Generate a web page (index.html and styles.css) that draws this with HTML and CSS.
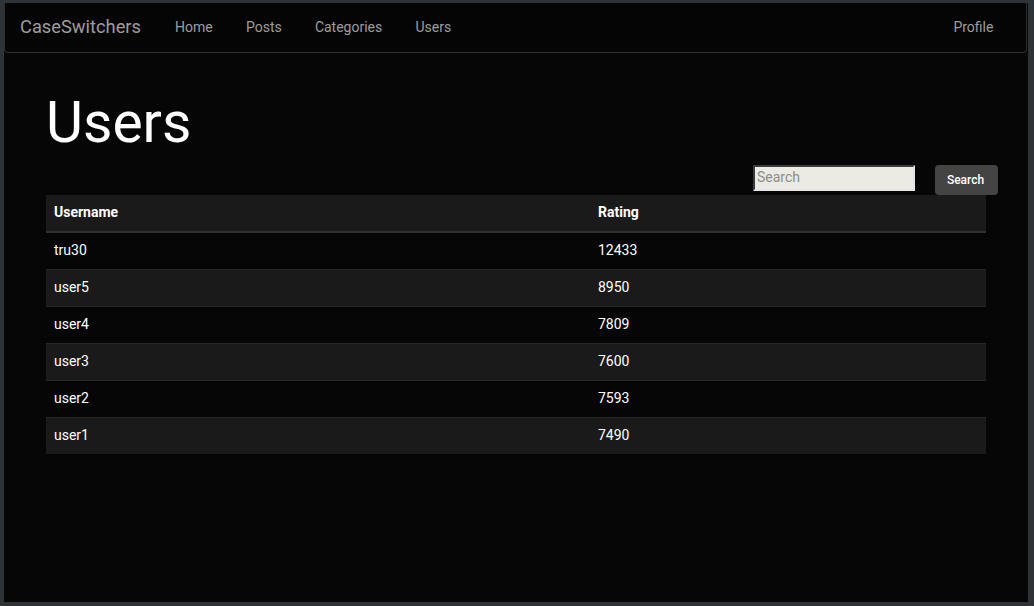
FILE: index.html
```html
<!DOCTYPE html>
<html lang="en">
<head>
<meta charset="utf-8">
<title>Users - CaseSwitchers</title>
<link rel="stylesheet" href="styles.css">
</head>
<body>
<nav class="navbar">
  <a class="brand" href="#">CaseSwitchers</a>
  <ul class="nav">
    <li><a href="#">Home</a></li>
    <li><a href="#">Posts</a></li>
    <li><a href="#">Categories</a></li>
    <li><a href="#">Users</a></li>
  </ul>
  <ul class="nav nav-right">
    <li><a href="#">Profile</a></li>
  </ul>
</nav>
<main class="container">
  <h1 class="title">Users</h1>
  <form class="search">
    <input class="search-input" type="text" placeholder="Search">
    <button class="search-btn" type="button">Search</button>
  </form>
  <table class="table">
    <thead>
      <tr><th class="col-name">Username</th><th>Rating</th></tr>
    </thead>
    <tbody>
      <tr><td>tru30</td><td>12433</td></tr>
      <tr><td>user5</td><td>8950</td></tr>
      <tr><td>user4</td><td>7809</td></tr>
      <tr><td>user3</td><td>7600</td></tr>
      <tr><td>user2</td><td>7593</td></tr>
      <tr><td>user1</td><td>7490</td></tr>
    </tbody>
  </table>
</main>
</body>
</html>
```
FILE: styles.css
```css
html {
  background: #2e3338;
  height: 100%;
}
body {
  margin: 3px 6px 4px 4px;
  height: 599px;
  background: #060606;
  font-family: Roboto, "Liberation Sans", Arial, sans-serif;
  color: #fff;
  font-size: 14px;
  line-height: 20px;
  overflow: hidden;
}
.navbar {
  display: flex;
  align-items: center;
  box-sizing: border-box;
  height: 50px;
  margin-right: 1px;
  border: 1px solid #2f2f2f;
  border-top: none;
  border-radius: 0 0 4px 4px;
  background: #050505;
  padding: 0 15px 2px;
}
.brand {
  color: #9d9d9d;
  text-decoration: none;
  font-size: 18.3px;
  line-height: 20px;
  margin-right: 17.5px;
}
.nav {
  list-style: none;
  margin: 0;
  padding: 0;
  display: flex;
}
.nav a {
  display: block;
  color: #9d9d9d;
  text-decoration: none;
  font-size: 14px;
  padding: 0 16.6px;
}
.nav-right {
  margin-left: auto;
  margin-right: 1px;
}
.container {
  width: 940px;
  margin: 0 auto;
}
.title {
  margin: 37px 0 0;
  font-size: 57px;
  line-height: 66px;
  font-weight: 400;
}
.search {
  display: flex;
  justify-content: flex-end;
  align-items: flex-start;
  margin: 9px -12px 0 0;
  height: 30px;
}
.search-input {
  box-sizing: border-box;
  width: 162px;
  height: 26px;
  margin: 0 20px 0 0;
  padding: 0 2px 2px;
  background: #ebebe4;
  border: 2px inset #8f8f8f;
  border-color: #8f8f8f #e6e6e6 #e6e6e6 #8f8f8f;
  font-family: Roboto, "Liberation Sans", Arial, sans-serif;
  font-size: 14px;
  color: #333;
}
.search-input::placeholder {
  color: #8c8c8c;
}
.search-btn {
  box-sizing: border-box;
  width: 63px;
  height: 30px;
  border: none;
  border-radius: 4px;
  background: #444;
  color: #fff;
  font-family: Roboto, "Liberation Sans", Arial, sans-serif;
  font-size: 12px;
  font-weight: 500;
  padding: 0 2px 0 0;
}
.table {
  width: 940px;
  border-collapse: collapse;
  border-spacing: 0;
}
.table th,
.table td {
  text-align: left;
  padding: 7px 8px 9px;
  line-height: 20px;
  vertical-align: top;
}
.table th {
  height: 19px;
  font-weight: 700;
  background: #1a1a1a;
  border-bottom: 2px solid #303030;
}
.col-name {
  width: 528px;
}
.table td {
  border-top: 1px solid #272727;
}
.table tbody tr:nth-child(even) td {
  background: #1a1a1a;
}
.table tbody tr:first-child td {
  border-top: none;
}
```
